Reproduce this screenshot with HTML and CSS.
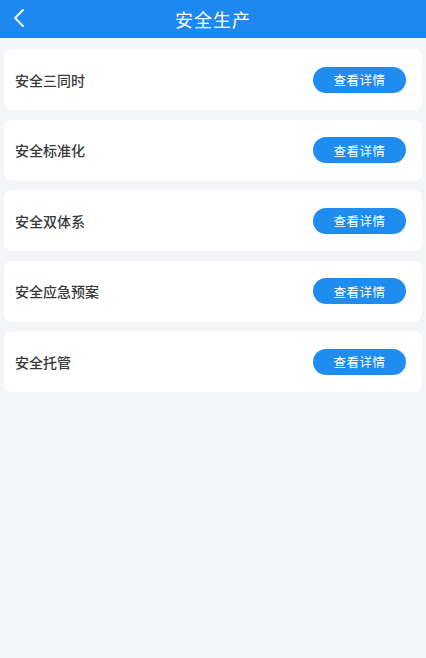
FILE: index.html
```html
<!DOCTYPE html>
<html lang="zh">
<head>
<meta charset="utf-8">
<link rel="stylesheet" href="styles.css">
</head>
<body>
<header class="topbar">
  <span class="back"><svg width="14" height="20" viewBox="0 0 14 20"><path d="M11 2 L3 10 L11 18" fill="none" stroke="#fff" stroke-width="1.8" stroke-linecap="round" stroke-linejoin="round"/></svg></span>
  <h1 class="title">安全生产</h1>
</header>
<main class="list">
  <div class="card"><span class="name">安全三同时</span><span class="btn">查看详情</span></div>
  <div class="card"><span class="name">安全标准化</span><span class="btn">查看详情</span></div>
  <div class="card"><span class="name">安全双体系</span><span class="btn">查看详情</span></div>
  <div class="card"><span class="name">安全应急预案</span><span class="btn">查看详情</span></div>
  <div class="card"><span class="name">安全托管</span><span class="btn">查看详情</span></div>
</main>
</body>
</html>
```
FILE: styles.css
```css
html, body {
  margin: 0;
  padding: 0;
  background: #f4f5f9;
  font-family: "Noto Sans CJK SC", "Noto Sans", sans-serif;
}
.topbar {
  height: 38px;
  background: #1e88f0;
  display: flex;
  align-items: center;
  justify-content: center;
  position: relative;
}
.back {
  position: absolute;
  left: 12px;
  top: 8px;
  display: flex;
}
.title {
  margin: 0;
  color: #fff;
  font-size: 18px;
  font-weight: 400;
  letter-spacing: 1px;
}
.list {
  padding: 11px 4px 0 4px;
  display: flex;
  flex-direction: column;
  gap: 9.5px;
}
.card {
  height: 61px;
  background: #fff;
  border-radius: 8px;
  display: flex;
  align-items: center;
  justify-content: space-between;
  padding: 0 16px 0 11px;
}
.name {
  font-size: 14px;
  color: #3a3a3a;
  font-weight: 500;
}
.btn {
  width: 93px;
  height: 26px;
  border-radius: 13px;
  background: #1f8cf0;
  color: #fff;
  font-size: 12.5px;
  display: flex;
  align-items: center;
  justify-content: center;
  letter-spacing: 0.5px;
}
```
